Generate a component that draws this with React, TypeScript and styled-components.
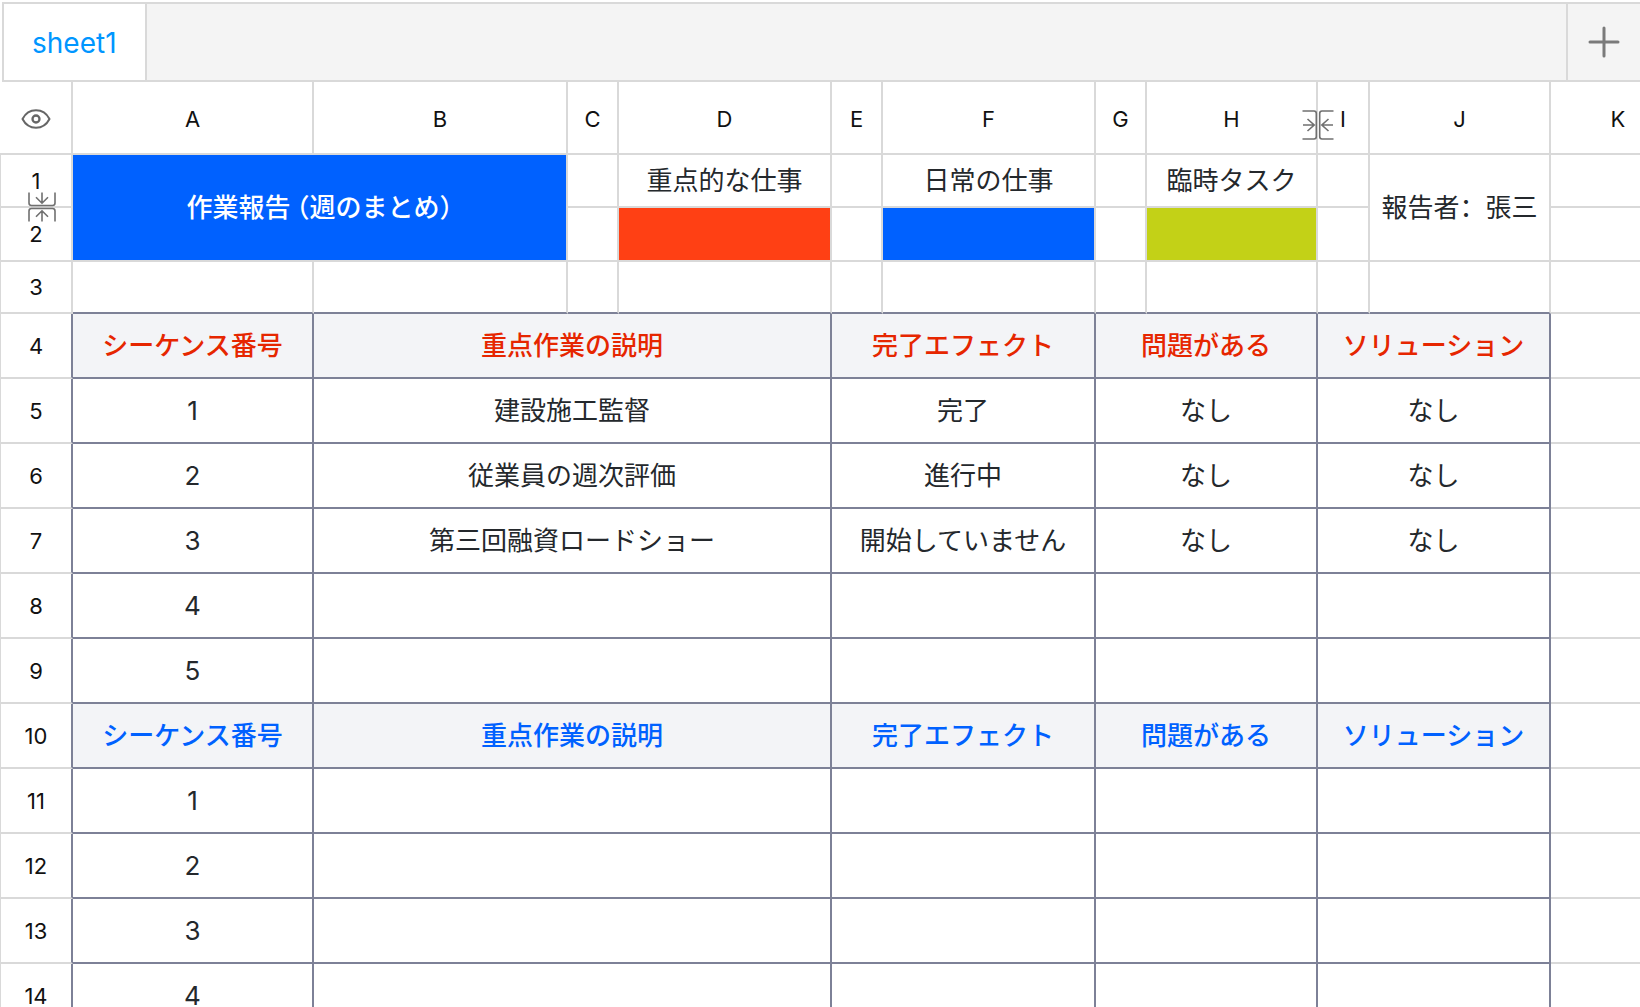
import React from "react";
import styled, { createGlobalStyle } from "styled-components";

const LINE = "#d9d9d9";
const DARK = "#7d8197";
const BLUE = "#0061ff";
const RED = "#e62600";

const GlobalStyle = createGlobalStyle`
  * { box-sizing: border-box; }
  body {
    margin: 0;
    background: #fff;
    font-family: Inter, "Noto Sans CJK JP", sans-serif;
  }
`;

const Page = styled.main`
  height: 100vh;
  overflow: hidden;
  display: flex;
  flex-direction: column;
`;

const TabBar = styled.nav`
  display: flex;
  flex: none;
  height: 80px;
  margin: 2px 0 0 2px;
  border: 2px solid ${LINE};
  border-right: 0;
  background: #f4f4f4;
`;

const Tab = styled.button`
  padding: 2px 28px 0;
  border: 0;
  border-right: 2px solid ${LINE};
  background: #fff;
  color: #0096ff;
  font: 400 28px/36px Inter, sans-serif;
`;

const AddButton = styled.button`
  display: flex;
  align-items: center;
  justify-content: center;
  width: 74px;
  margin-left: auto;
  padding: 0;
  border: 0;
  border-left: 2px solid ${LINE};
  background: transparent;
`;

const SheetArea = styled.div`
  flex: 1;
  min-height: 0;
  overflow: hidden;
`;

const Table = styled.table`
  width: max(1687px, 100%);
  table-layout: fixed;
  border-collapse: separate;
  border-spacing: 0;
`;

const Col = styled.col<{ $w?: number }>`
  width: ${(p) => (p.$w ? `${p.$w}px` : "auto")};
`;

const Row = styled.tr<{ $h: number }>`
  height: ${(p) => p.$h}px;
`;

const Head = styled.th<{ $side?: boolean; $dark?: boolean }>`
  position: relative;
  padding: ${(p) => (p.$side ? "0" : "2px 0 0")};
  border: 0 solid ${LINE};
  border-width: 0 2px 2px ${(p) => (p.$side ? "1px" : "0")};
  border-right-color: ${(p) => (p.$dark ? DARK : LINE)};
  color: #111;
  font-size: 22px;
  font-weight: 400;
  line-height: 28px;
  text-align: center;
  vertical-align: middle;
`;

const Cell = styled.td<{
  $fill?: string;
  $color?: string;
  $bold?: boolean;
  $right?: string;
  $bottom?: string;
}>`
  padding: 0;
  border: 0 solid ${LINE};
  border-width: 0 2px 2px 0;
  border-right-color: ${(p) => p.$right ?? LINE};
  border-bottom-color: ${(p) => p.$bottom ?? LINE};
  background: ${(p) => p.$fill ?? "#fff"};
  background-clip: padding-box;
  color: ${(p) => p.$color ?? "#24282c"};
  font-size: 26px;
  font-weight: ${(p) => (p.$bold ? 500 : 400)};
  line-height: 36px;
  text-align: center;
  vertical-align: middle;
  white-space: nowrap;
`;

const Reporter = styled.span`
  font-family: Inter, "Noto Sans CJK SC", sans-serif;
`;

const Paren = styled.span<{ $open?: boolean }>`
  padding-left: ${(p) => (p.$open ? "6px" : "0")};
  font-feature-settings: "halt";
`;

const Fold = styled.button<{ $axis: "row" | "column" }>`
  position: absolute;
  z-index: 1;
  padding: 0;
  border: 0;
  background: transparent;
  ${(p) =>
    p.$axis === "row"
      ? "left: 27px; bottom: -16px; width: 28px; height: 30px;"
      : "right: -18px; top: 28px; width: 32px; height: 30px;"}
  svg { display: block; }
`;

const EyeSvg = styled.svg`
  display: block;
  margin: 0 auto;
`;

const EyeIcon = () => (
  <EyeSvg width="30" height="22" viewBox="0 0 30 22" fill="none" stroke="#666" strokeWidth="2">
    <path d="M1.5 11C4.5 5.200 9.300 2.300 15 2.300S25.500 5.200 28.500 11C25.500 16.800 20.700 19.700 15 19.700S4.500 16.800 1.500 11Z" strokeLinejoin="round" />
    <circle cx="15" cy="11" r="3.500" strokeWidth="2.300" />
  </EyeSvg>
);

const PlusIcon = () => (
  <svg width="32" height="32" viewBox="0 0 32 32" stroke="#7a7a7a" strokeWidth="3" strokeLinecap="round">
    <path d="M2 16H30M16 2V30" />
  </svg>
);

const FoldRowsIcon = () => (
  <svg width="28" height="30" viewBox="0 0 28 30" fill="none" stroke="#707070" strokeWidth="1.600">
    <path d="M1 .5V11q0 2.500 2.500 2.500H24.500q2.500 0 2.500-2.500V.5M14 .5V11M8 5.200L14 11.200L20 5.200" />
    <path d="M1 29.500V19q0-2.500 2.500-2.500H24.500q2.500 0 2.500 2.500V29.500M14 29.500V19M8 24.800L14 18.800L20 24.800" />
  </svg>
);

const FoldColumnsIcon = () => (
  <svg width="32" height="30" viewBox="0 0 32 30" fill="none" stroke="#707070" strokeWidth="1.600">
    <path d="M.5 1H12q2.300 0 2.300 2.500V26.500q0 2.500-2.300 2.500H.5M1 15H12.200M5.500 9L12.200 15L5.500 21" />
    <path d="M31.500 1H20q-2.300 0-2.300 2.500V26.500q0 2.500 2.300 2.500H31.500M31 15H19.800M26.500 9L19.800 15L26.500 21" />
  </svg>
);

const columns = [
  { name: "A", width: 241 },
  { name: "B", width: 254 },
  { name: "C", width: 51 },
  { name: "D", width: 213 },
  { name: "E", width: 51 },
  { name: "F", width: 213 },
  { name: "G", width: 51 },
  { name: "H", width: 171 },
  { name: "I", width: 52 },
  { name: "J", width: 181 },
  { name: "K" },
];

const titles = ["シーケンス番号", "重点作業の説明", "完了エフェクト", "問題がある", "ソリューション"];
const spans = [1, 3, 2, 2, 2];

type Line = { texts: string[]; title?: string };

const lines: Line[] = [
  { texts: titles, title: RED },
  { texts: ["1", "建設施工監督", "完了", "なし", "なし"] },
  { texts: ["2", "従業員の週次評価", "進行中", "なし", "なし"] },
  { texts: ["3", "第三回融資ロードショー", "開始していません", "なし", "なし"] },
  { texts: ["4", "", "", "", ""] },
  { texts: ["5", "", "", "", ""] },
  { texts: titles, title: BLUE },
  { texts: ["1", "", "", "", ""] },
  { texts: ["2", "", "", "", ""] },
  { texts: ["3", "", "", "", ""] },
  { texts: ["4", "", "", "", ""] },
];

export default function App() {
  return (
    <Page>
      <GlobalStyle />
      <TabBar>
        <Tab type="button">sheet1</Tab>
        <AddButton type="button" aria-label="add sheet">
          <PlusIcon />
        </AddButton>
      </TabBar>
      <SheetArea>
        <Table>
          <colgroup>
            <Col $w={73} />
            {columns.map((c) => (
              <Col key={c.name} $w={c.width} />
            ))}
          </colgroup>
          <thead>
            <Row $h={73}>
              <Head>
                <EyeIcon />
              </Head>
              {columns.map((c) => (
                <Head key={c.name} scope="col">
                  {c.name}
                  {c.name === "H" && (
                    <Fold type="button" $axis="column" aria-label="fold columns">
                      <FoldColumnsIcon />
                    </Fold>
                  )}
                </Head>
              ))}
            </Row>
          </thead>
          <tbody>
            <Row $h={53}>
              <Head scope="row" $side>
                1
                <Fold type="button" $axis="row" aria-label="fold rows">
                  <FoldRowsIcon />
                </Fold>
              </Head>
              <Cell colSpan={2} rowSpan={2} $fill={BLUE} $color="#fff" $bold>
                作業報告<Paren $open>（</Paren>週のまとめ<Paren>）</Paren>
              </Cell>
              <Cell />
              <Cell>重点的な仕事</Cell>
              <Cell />
              <Cell>日常の仕事</Cell>
              <Cell />
              <Cell>臨時タスク</Cell>
              <Cell />
              <Cell rowSpan={2}>
                <Reporter>報告者：張三</Reporter>
              </Cell>
              <Cell />
            </Row>
            <Row $h={54}>
              <Head scope="row" $side>2</Head>
              <Cell />
              <Cell $fill="#ff4014" />
              <Cell />
              <Cell $fill={BLUE} />
              <Cell />
              <Cell $fill="#c3d117" />
              <Cell />
              <Cell />
            </Row>
            <Row $h={52}>
              <Head scope="row" $side>3</Head>
              {columns.map((c) => (
                <Cell key={c.name} $bottom={c.name === "K" ? LINE : DARK} />
              ))}
            </Row>
            {lines.map((line, i) => (
              <Row key={i} $h={65}>
                <Head scope="row" $side $dark>
                  {i + 4}
                </Head>
                {line.texts.map((text, j) => (
                  <Cell
                    key={j}
                    colSpan={spans[j]}
                    $right={DARK}
                    $bottom={DARK}
                    $fill={line.title && "#f3f4f7"}
                    $color={line.title}
                    $bold={!!line.title}
                  >
                    {text}
                  </Cell>
                ))}
                <Cell />
              </Row>
            ))}
          </tbody>
        </Table>
      </SheetArea>
    </Page>
  );
}
